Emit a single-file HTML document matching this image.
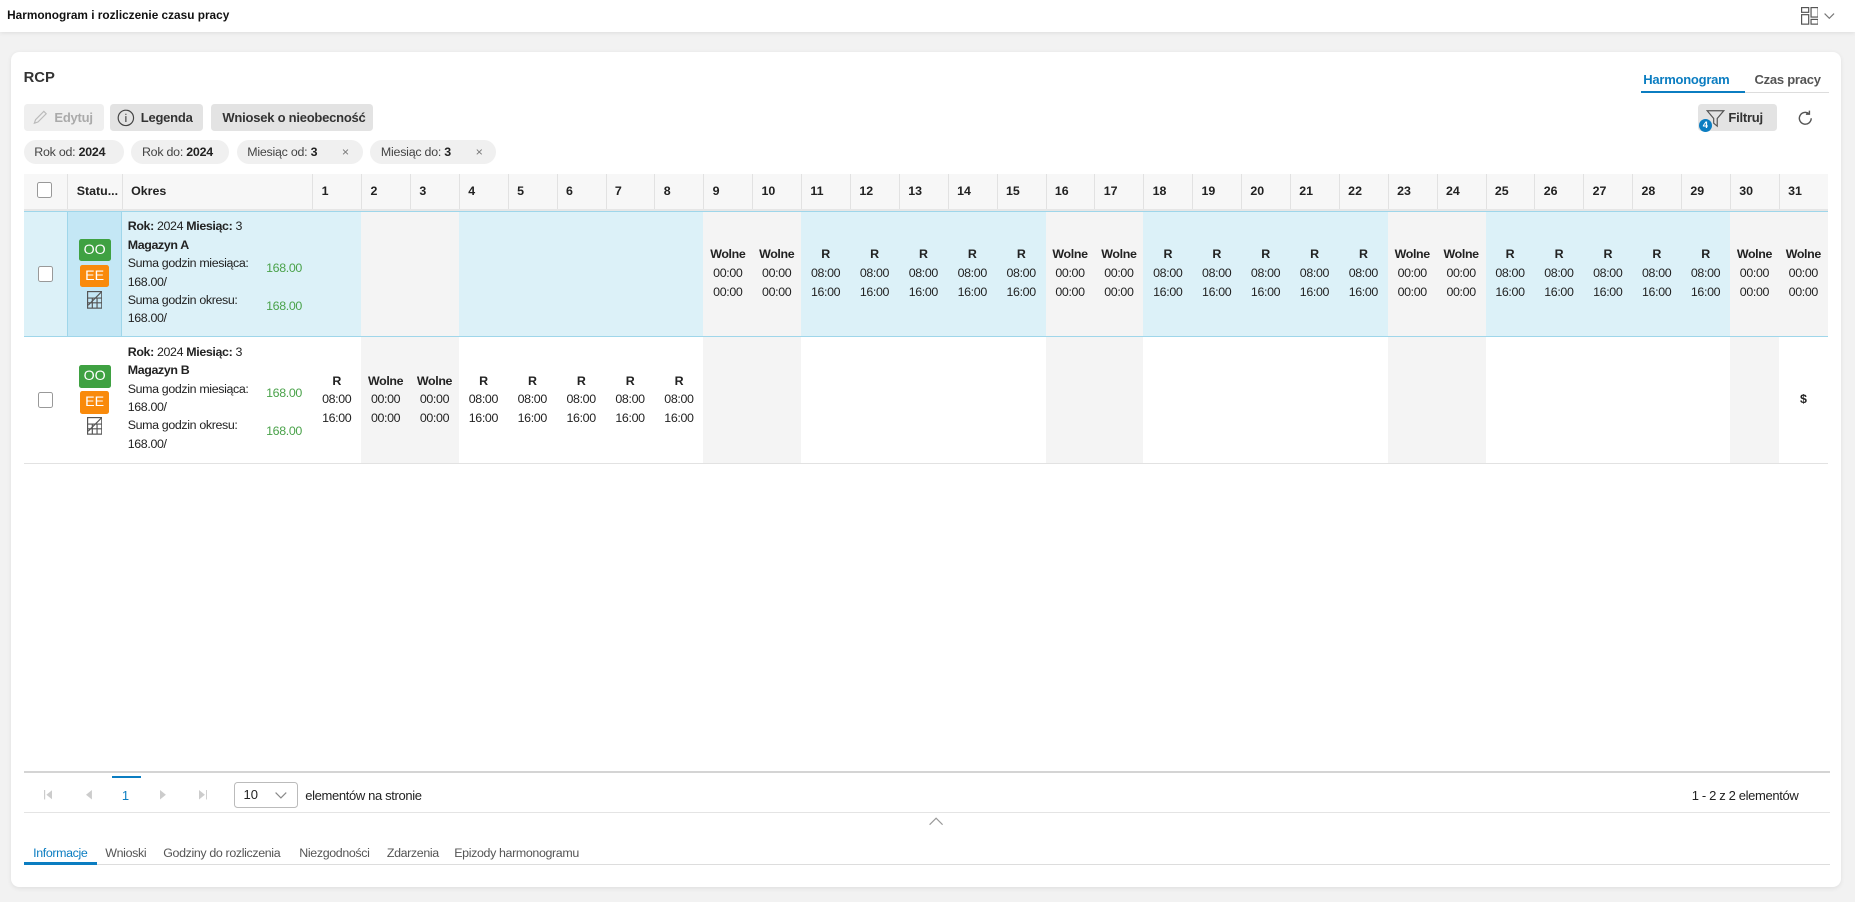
<!DOCTYPE html>
<html><head><meta charset="utf-8">
<style>
html{zoom:1.18304}
*{box-sizing:border-box;margin:0;padding:0}
body{width:1568px;height:762px;background:#f2f2f2;font-family:"Liberation Sans",Arial,sans-serif;color:#222;position:relative;overflow:hidden;font-size:11px;white-space:nowrap}
.top{position:absolute;left:0;top:0;width:1568px;height:27px;background:#fff;box-shadow:0 1px 4px rgba(0,0,0,.1)}
.top .t{position:absolute;left:6px;top:7px;font-size:10px;font-weight:bold;color:#111}
.card{position:absolute;left:9px;top:44px;width:1547px;height:706px;background:#fff;border-radius:7px;box-shadow:0 1px 4px rgba(0,0,0,.08)}
.a{position:absolute}
.btn{position:absolute;top:44px;height:23px;background:#e3e3e3;border-radius:3px;font-size:11px;font-weight:bold;color:#333;line-height:23px;padding-left:10px;letter-spacing:-.2px}
.chip{position:absolute;top:74px;height:21px;background:#f0f0f0;border-radius:11px;font-size:10.5px;color:#444;line-height:21px;padding-left:9px;letter-spacing:-.2px}
.chip b{color:#222}
.grid{position:absolute;left:11px;width:1525px;display:grid;grid-template-columns:37px 46px 161px repeat(31,minmax(0,1fr))}
.hd{top:103px;height:31px;background:#f7f7f7;border-bottom:2px solid #e6e6e6}
.hd div{border-left:1px solid #e2e2e2;font-weight:bold;font-size:10.5px;line-height:29px;padding-left:7px;color:#222;overflow:hidden}
.hd div:first-child{border-left:none}
.r1{top:134px;height:107px;background:#dcf1f8;border-top:1px solid #9fd6ea;border-bottom:1px solid #9fd6ea}
.r2{top:241px;height:107px;background:#fff;border-bottom:1px solid #e2e2e2}
.c{display:flex;align-items:center;justify-content:center;text-align:center;line-height:16px;font-size:10.5px;letter-spacing:-.3px}
.g{background:#f4f4f4}
.cb{width:13px;height:13px;border:1px solid #999;border-radius:2px;background:#fff}
.st{display:flex;flex-direction:column;align-items:center;justify-content:center;gap:3px}
.r1 .st{background:#c4e7f5;border-left:1px solid #9fd6ea;border-right:1px solid #9fd6ea}
.oo{width:27px;height:19px;background:#3fa142;color:#fff;font-size:12px;line-height:19px;text-align:center;border-radius:2px}
.ee{width:25px;height:19px;background:#f98a0b;color:#fff;font-size:12px;line-height:19px;text-align:center;border-radius:2px}
.ok{position:relative;font-size:10.5px;line-height:15.5px;padding:5px 0 0 5px;letter-spacing:-.3px}
.ok .gr{position:absolute;left:122px;color:#4aa24a}
.tab{position:absolute;font-size:10.5px;color:#555;top:671px;letter-spacing:-.3px}
</style></head><body>
<div class="top"><div class="t">Harmonogram i rozliczenie czasu pracy</div>
<svg class="a" style="left:1522px;top:6px" width="15" height="15" viewBox="0 0 15 15" fill="none" stroke="#555" stroke-width="1"><rect x=".5" y=".5" width="6" height="4"/><rect x=".5" y="6.5" width="6" height="8"/><rect x="8.5" y=".5" width="6" height="8"/><rect x="8.5" y="10.5" width="6" height="4"/></svg>
<svg class="a" style="left:1542px;top:11px" width="9" height="6" viewBox="0 0 9 6" fill="none" stroke="#777"><path d="M.5 .5L4.5 4.5 8.5 .5"/></svg>
</div>
<div class="card">
<div class="a" style="left:11px;top:15px;font-size:12.5px;font-weight:bold;color:#333">RCP</div>
<div class="a" style="left:1380px;top:17px;font-size:11px;font-weight:bold;color:#0b7dc1;letter-spacing:-.2px">Harmonogram</div>
<div class="a" style="left:1474px;top:17px;font-size:11px;font-weight:bold;color:#555;letter-spacing:-.2px">Czas pracy</div>
<div class="a" style="left:1378px;top:33px;width:88px;height:2px;background:#0b7dc1"></div>
<div class="a" style="left:1466px;top:34px;width:71px;height:1px;background:#ddd"></div>

<div class="btn" style="left:11px;width:68px;background:#efefef;color:#aaa;padding-left:26px">Edytuj
<svg class="a" style="left:7px;top:4px" width="14" height="14" viewBox="0 0 14 14" fill="none" stroke="#bbb"><path d="M2 12l1-3 7-7 2 2-7 7z"/></svg></div>
<div class="btn" style="left:84px;width:79px;padding-left:26px">Legenda
<svg class="a" style="left:6px;top:4px" width="15" height="15" viewBox="0 0 15 15" fill="none" stroke="#444"><circle cx="7.5" cy="7.5" r="6.5"/><path d="M7.5 6v5M7.5 4v1"/></svg></div>
<div class="btn" style="left:169px;width:137px">Wniosek o nieobecność</div>
<div class="btn" style="left:1426px;width:67px;padding-left:26px">Filtruj
<svg class="a" style="left:7px;top:4px" width="16" height="16" viewBox="0 0 16 16" fill="none" stroke="#555"><path d="M1 1.5h14L9.5 8v6.5L6.5 12V8z"/></svg>
<div class="a" style="left:1px;top:13px;width:11px;height:11px;border-radius:50%;background:#0b7dc1;color:#fff;font-size:8px;line-height:11px;text-align:center;padding:0">4</div></div>
<svg class="a" style="left:1510px;top:49px" width="14" height="14" viewBox="0 0 14 14" fill="none" stroke="#555" stroke-width="1.2"><path d="M12 7A5 5 0 1 1 10 3M10.5 .5v3h-3"/></svg>

<div class="chip" style="left:11px;width:85px">Rok od: <b>2024</b></div>
<div class="chip" style="left:102px;width:83px">Rok do: <b>2024</b></div>
<div class="chip" style="left:191px;width:107px">Miesiąc od: <b>3</b><span class="a" style="left:89px;color:#777">×</span></div>
<div class="chip" style="left:304px;width:106px">Miesiąc do: <b>3</b><span class="a" style="left:89px;color:#777">×</span></div>

<div class="grid hd"><div style="padding-left:11px;padding-top:7px"><div class="cb" style="border-left:1px solid #999"></div></div><div>Statu...</div><div>Okres</div><div>1</div><div>2</div><div>3</div><div>4</div><div>5</div><div>6</div><div>7</div><div>8</div><div>9</div><div>10</div><div>11</div><div>12</div><div>13</div><div>14</div><div>15</div><div>16</div><div>17</div><div>18</div><div>19</div><div>20</div><div>21</div><div>22</div><div>23</div><div>24</div><div>25</div><div>26</div><div>27</div><div>28</div><div>29</div><div>30</div><div>31</div></div>

<div class="grid r1">
<div class="c"><div class="cb"></div></div>
<div class="st"><div class="oo">OO</div><div class="ee">EE</div><svg width="13" height="15" viewBox="0 0 13 15" fill="none" stroke="#555"><rect x=".5" y=".5" width="12" height="14"/><path d="M.5 6h12M.5 10h12M4.5 6v8.5M8.5 6v8.5M1 12L12 1"/></svg></div>
<div class="ok"><b>Rok:</b> 2024 <b>Miesiąc:</b> 3<br><b>Magazyn A</b><br>Suma godzin miesiąca:<br>168.00/<br>Suma godzin okresu:<br>168.00/<span class="gr" style="top:40px">168.00</span><span class="gr" style="top:72px">168.00</span></div>
<div class="c"></div><div class="c g"></div><div class="c g"></div><div class="c"></div><div class="c"></div><div class="c"></div><div class="c"></div><div class="c"></div>
<div class="c g"><div><b>Wolne</b><br>00:00<br>00:00</div></div><div class="c g"><div><b>Wolne</b><br>00:00<br>00:00</div></div>
<div class="c"><div><b>R</b><br>08:00<br>16:00</div></div><div class="c"><div><b>R</b><br>08:00<br>16:00</div></div><div class="c"><div><b>R</b><br>08:00<br>16:00</div></div><div class="c"><div><b>R</b><br>08:00<br>16:00</div></div><div class="c"><div><b>R</b><br>08:00<br>16:00</div></div>
<div class="c g"><div><b>Wolne</b><br>00:00<br>00:00</div></div><div class="c g"><div><b>Wolne</b><br>00:00<br>00:00</div></div>
<div class="c"><div><b>R</b><br>08:00<br>16:00</div></div><div class="c"><div><b>R</b><br>08:00<br>16:00</div></div><div class="c"><div><b>R</b><br>08:00<br>16:00</div></div><div class="c"><div><b>R</b><br>08:00<br>16:00</div></div><div class="c"><div><b>R</b><br>08:00<br>16:00</div></div>
<div class="c g"><div><b>Wolne</b><br>00:00<br>00:00</div></div><div class="c g"><div><b>Wolne</b><br>00:00<br>00:00</div></div>
<div class="c"><div><b>R</b><br>08:00<br>16:00</div></div><div class="c"><div><b>R</b><br>08:00<br>16:00</div></div><div class="c"><div><b>R</b><br>08:00<br>16:00</div></div><div class="c"><div><b>R</b><br>08:00<br>16:00</div></div><div class="c"><div><b>R</b><br>08:00<br>16:00</div></div>
<div class="c g"><div><b>Wolne</b><br>00:00<br>00:00</div></div><div class="c g"><div><b>Wolne</b><br>00:00<br>00:00</div></div>
</div>

<div class="grid r2">
<div class="c"><div class="cb"></div></div>
<div class="st"><div class="oo">OO</div><div class="ee">EE</div><svg width="13" height="15" viewBox="0 0 13 15" fill="none" stroke="#555"><rect x=".5" y=".5" width="12" height="14"/><path d="M.5 6h12M.5 10h12M4.5 6v8.5M8.5 6v8.5M1 12L12 1"/></svg></div>
<div class="ok"><b>Rok:</b> 2024 <b>Miesiąc:</b> 3<br><b>Magazyn B</b><br>Suma godzin miesiąca:<br>168.00/<br>Suma godzin okresu:<br>168.00/<span class="gr" style="top:40px">168.00</span><span class="gr" style="top:72px">168.00</span></div>
<div class="c"><div><b>R</b><br>08:00<br>16:00</div></div>
<div class="c g"><div><b>Wolne</b><br>00:00<br>00:00</div></div><div class="c g"><div><b>Wolne</b><br>00:00<br>00:00</div></div>
<div class="c"><div><b>R</b><br>08:00<br>16:00</div></div><div class="c"><div><b>R</b><br>08:00<br>16:00</div></div><div class="c"><div><b>R</b><br>08:00<br>16:00</div></div><div class="c"><div><b>R</b><br>08:00<br>16:00</div></div><div class="c"><div><b>R</b><br>08:00<br>16:00</div></div>
<div class="c g"></div><div class="c g"></div><div class="c"></div><div class="c"></div><div class="c"></div><div class="c"></div><div class="c"></div>
<div class="c g"></div><div class="c g"></div><div class="c"></div><div class="c"></div><div class="c"></div><div class="c"></div><div class="c"></div>
<div class="c g"></div><div class="c g"></div><div class="c"></div><div class="c"></div><div class="c"></div><div class="c"></div><div class="c"></div>
<div class="c g"></div><div class="c"><b>$</b></div>
</div>

<div class="a" style="left:11px;top:608px;width:1527px;height:1px;background:#d4d4d4"></div>
<svg class="a" style="left:28px;top:624px" width="7" height="8" viewBox="0 0 7 8" fill="#ccc"><rect x="0" y="0" width="1" height="8"/><path d="M7 0v8L2 4z"/></svg>
<svg class="a" style="left:64px;top:624px" width="5" height="8" viewBox="0 0 5 8" fill="#ccc"><path d="M5 0v8L0 4z"/></svg>
<div class="a" style="left:86px;top:612px;width:24px;height:2px;background:#0b7dc1"></div>
<div class="a" style="left:94px;top:622px;font-size:11px;color:#0b7dc1">1</div>
<svg class="a" style="left:126px;top:624px" width="5" height="8" viewBox="0 0 5 8" fill="#ccc"><path d="M0 0v8L5 4z"/></svg>
<svg class="a" style="left:159px;top:624px" width="7" height="8" viewBox="0 0 7 8" fill="#ccc"><path d="M0 0v8L5 4z"/><rect x="6" y="0" width="1" height="8"/></svg>
<div class="a" style="left:189px;top:617px;width:54px;height:22px;border:1px solid #bbb;border-radius:3px;font-size:11px;line-height:20px;padding-left:7px">10
<svg class="a" style="left:34px;top:8px" width="10" height="6" viewBox="0 0 10 6" fill="none" stroke="#888"><path d="M.5 .5L5 5 9.5 .5"/></svg></div>
<div class="a" style="left:249px;top:622px;font-size:11px;letter-spacing:-.3px">elementów na stronie</div>
<div class="a" style="left:1421px;top:622px;font-size:11px;letter-spacing:-.3px">1 - 2 z 2 elementów</div>
<div class="a" style="left:11px;top:642px;width:1527px;height:1px;background:#e4e4e4"></div>
<svg class="a" style="left:776px;top:647px" width="12" height="7" viewBox="0 0 12 7" fill="none" stroke="#999"><path d="M.5 6.5L6 1l5.5 5.5"/></svg>

<div class="tab" style="left:19px;color:#0b7dc1">Informacje</div>
<div class="tab" style="left:80px">Wnioski</div>
<div class="tab" style="left:129px">Godziny do rozliczenia</div>
<div class="tab" style="left:244px">Niezgodności</div>
<div class="tab" style="left:318px">Zdarzenia</div>
<div class="tab" style="left:375px">Epizody harmonogramu</div>
<div class="a" style="left:11px;top:686px;width:1527px;height:1px;background:#ddd"></div>
<div class="a" style="left:11px;top:685px;width:62px;height:2px;background:#0b7dc1"></div>
</div>
</body></html>
